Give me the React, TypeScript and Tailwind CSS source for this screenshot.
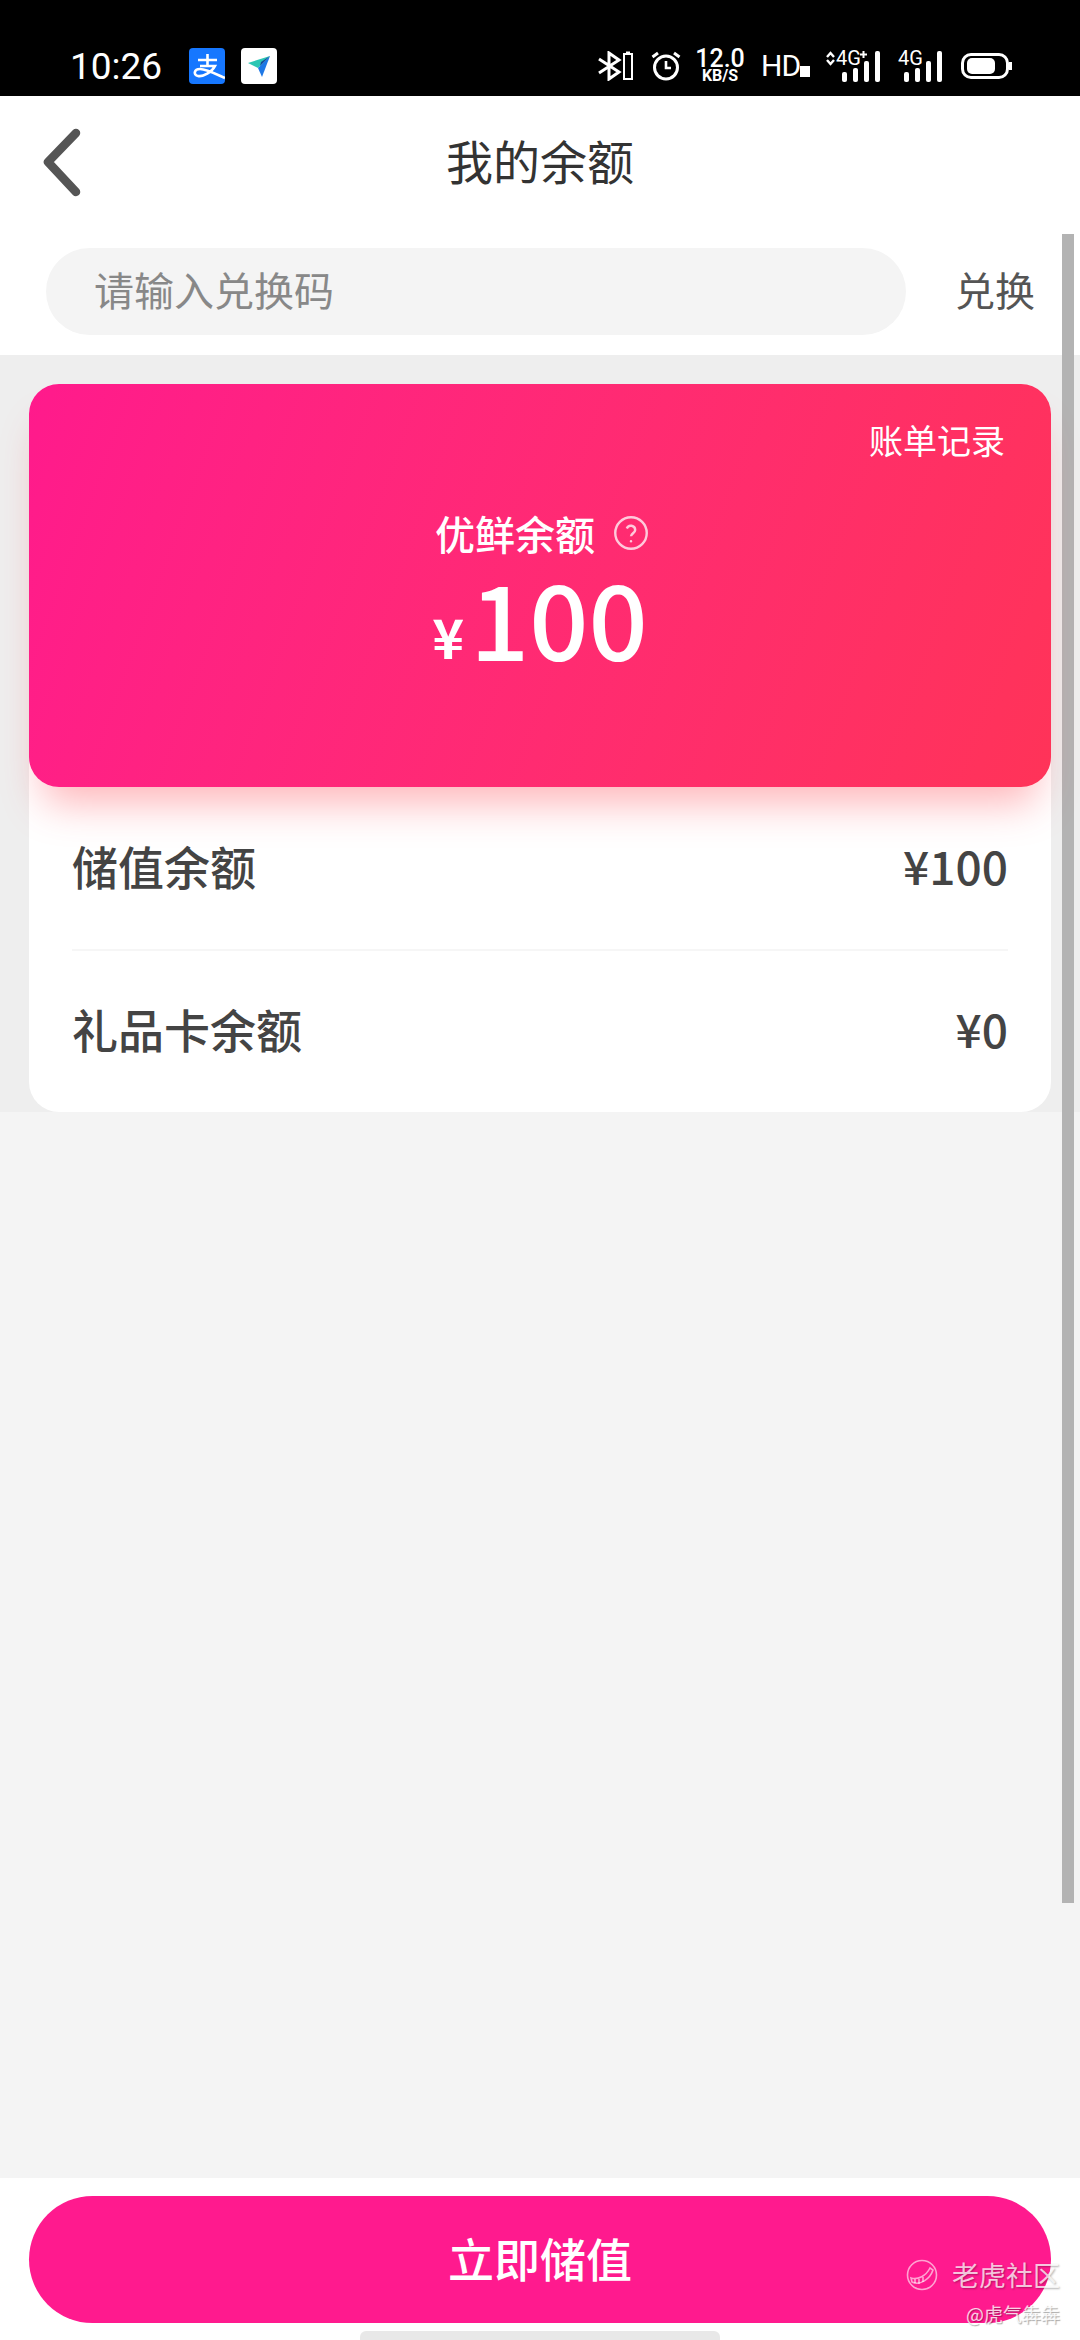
import React from 'react'

function AlipayIcon() {
  return (
    <svg width="36" height="36" viewBox="0 0 36 36" className="rounded-[4px]">
      <rect width="36" height="36" fill="#1677ff" />
      <path
        d="M9 12H28M18.5 6V18M11 18H26C23 24 14 29 9 28C4 27 5 21 11 21C17 21 27 26 36 30"
        fill="none"
        stroke="#fff"
        strokeWidth="2.6"
      />
    </svg>
  )
}

function PlaneIcon() {
  return (
    <svg width="36" height="36" viewBox="0 0 36 36" className="rounded-[4px]">
      <rect width="36" height="36" fill="#fff" />
      <path d="M7 15L29 8L17 20Z" fill="#2cc6b4" />
      <path d="M29 8L17 20L21 29Z" fill="#1e78e6" />
      <path d="M29 8L20 14L19 18Z" fill="#154a9c" />
    </svg>
  )
}

function BluetoothIcon() {
  return (
    <svg width="36" height="30" viewBox="0 0 36 30" fill="none" stroke="#fff">
      <path d="M1 8L21 21L11 28V2L21 9L1 22" strokeWidth="3" />
      <rect x="26" y="3" width="8" height="25" strokeWidth="2" />
      <path d="M28 1.5H32" strokeWidth="2" />
    </svg>
  )
}

function AlarmIcon() {
  return (
    <svg width="30" height="30" viewBox="0 0 30 30" fill="none" stroke="#fff" strokeWidth="3">
      <circle cx="15" cy="16.5" r="11.5" />
      <path d="M15 10V17H20" strokeWidth="2.6" />
      <path d="M1.5 6L7 2M23 2L28.5 6" />
    </svg>
  )
}

function SignalIcon({ plus }: { plus?: boolean }) {
  return (
    <svg width={plus ? 56 : 44} height="32" viewBox={plus ? '-17 0 56 32' : '-6 0 44 32'} fill="#fff" className="overflow-visible">
      {plus && <path d="M-15 7L-11.5 3L-8 7M-15 10L-11.5 14L-8 10" fill="none" stroke="#fff" strokeWidth="2.4" />}
      <text x="-6" y="15" fontFamily="Roboto, sans-serif" fontSize="20">
        4G
      </text>
      {plus && <path d="M21.5 1V8M18 4.5H25" stroke="#fff" strokeWidth="2" />}
      <rect x="0" y="22" width="5" height="10" rx="2" />
      <rect x="11" y="18" width="5" height="14" rx="2" />
      <rect x="22" y="11" width="5" height="21" rx="2" />
      <rect x="33" y="1" width="5" height="31" rx="2" />
    </svg>
  )
}

function BatteryIcon() {
  return (
    <svg width="52" height="26" viewBox="0 0 52 26" fill="none">
      <rect x="1.5" y="1.5" width="45" height="23" rx="8.5" stroke="#fff" strokeWidth="3" />
      <rect x="6" y="5" width="28" height="16" rx="5" fill="#fff" />
      <path d="M49.5 9V17" stroke="#fff" strokeWidth="3" />
    </svg>
  )
}

function StatusBar() {
  return (
    <div className="h-[96px] bg-black flex items-end justify-between pl-[70px] pr-[67px] pb-[12px] text-white font-['Roboto',sans-serif]">
      <div className="flex items-center h-[36px]">
        <span className="text-[37px] leading-none w-[119px]">10:26</span>
        <AlipayIcon />
        <div className="ml-[16px]">
          <PlaneIcon />
        </div>
      </div>
      <div className="flex items-center h-[36px]">
        <BluetoothIcon />
        <div className="ml-[17px]">
          <AlarmIcon />
        </div>
        <div className="ml-[16px] w-[46px] flex flex-col items-center">
          <span className="text-[25px] font-medium leading-[19px]">12.0</span>
          <span className="text-[16px] font-bold leading-[15px]">KB/S</span>
        </div>
        <div className="ml-[18px] w-[49px] flex items-end">
          <span className="text-[30px] leading-[28px] tracking-[-1px]">HD</span>
          <span className="shrink-0 ml-auto mb-[3px] w-[10px] h-[11px] bg-white" />
        </div>
        <div className="ml-[15px]">
          <SignalIcon plus />
        </div>
        <div className="ml-[17px]">
          <SignalIcon />
        </div>
        <div className="ml-[19px]">
          <BatteryIcon />
        </div>
      </div>
    </div>
  )
}

function BalanceRow({ label, value }: { label: string; value: string }) {
  return (
    <div className="flex-1 flex items-center justify-between pb-[5px] text-[#444] text-[46px] font-medium">
      <span>{label}</span>
      <span>{value}</span>
    </div>
  )
}

export default function App() {
  return (
    <div className="relative w-[1080px] h-[2340px] flex flex-col overflow-hidden bg-[#f4f4f4] font-['Noto_Sans_CJK_SC','Noto_Sans',sans-serif]">
      <StatusBar />

      <div className="h-[134px] bg-white grid grid-cols-[1fr_auto_1fr] items-center">
        <svg width="40" height="70" viewBox="0 0 40 70" fill="none" className="ml-[42px]">
          <path d="M34 5L6 34L34 64" stroke="#555" strokeWidth="8.5" strokeLinecap="round" strokeLinejoin="round" />
        </svg>
        <h1 className="pb-[7px] text-[47px] text-[#333] font-normal leading-none">我的余额</h1>
      </div>

      <div className="h-[125px] bg-white flex pl-[46px] pt-[18px]">
        <input
          placeholder="请输入兑换码"
          className="w-[860px] h-[87px] rounded-full bg-[#f4f4f4] pl-[48px] pb-[5px] text-[40px] outline-none placeholder:text-[#888]"
        />
        <span className="ml-[49px] h-[87px] pb-[5px] flex items-center text-[40px] text-[#555]">兑换</span>
      </div>

      <div className="bg-[#eeeeee] px-[29px] pt-[29px]">
        <div className="h-[728px] bg-white rounded-[30px] flex flex-col">
          <div className="relative z-10 h-[403px] rounded-[30px] bg-linear-110 from-[#ff1a8c] to-[#ff3358] shadow-[0_30px_40px_-14px_rgba(255,70,80,0.4)] flex flex-col items-center text-white">
            <div className="self-end mt-[30px] mr-[46px] text-[34px] leading-[52px]">账单记录</div>
            <div className="mt-[37px] ml-[4px] flex items-center text-[40px] font-medium leading-[60px]">
              <span>优鲜余额</span>
              <svg width="36" height="36" viewBox="0 0 24 24" fill="none" stroke="#ffffff" strokeOpacity="0.75" strokeWidth="1.6" className="ml-[18px]">
                <circle cx="12" cy="12" r="10.5" />
                <path d="M9.2 9a2.9 2.9 0 0 1 5.6 1c0 1.9-2.8 2.4-2.8 4.2" />
                <path d="M12 17.4v.1" strokeLinecap="round" />
              </svg>
            </div>
            <div className="-mt-[1px] flex items-baseline leading-[108px]">
              <span className="text-[54px] font-bold -translate-y-[2px]">¥</span>
              <span className="ml-[6px] text-[104px] font-medium">100</span>
            </div>
          </div>
          <div className="flex-1 mx-[43px] flex flex-col">
            <BalanceRow label="储值余额" value="¥100" />
            <div className="h-[2px] bg-[#f6f6f6]" />
            <BalanceRow label="礼品卡余额" value="¥0" />
          </div>
        </div>
      </div>

      <div className="flex-1" />

      <div className="h-[162px] bg-white px-[29px] pt-[18px]">
        <button className="w-full h-[127px] pb-[4px] rounded-full bg-[#ff1a8e] text-white text-[46px] font-medium">立即储值</button>
      </div>

      {/* scrollbar + home bar + watermark sit on top of the page */}
      <div className="absolute left-[1062px] top-[234px] w-[12px] h-[1669px] bg-[#b3b3b3]" />
      <div className="absolute left-[360px] top-[2331px] w-[360px] h-[9px] rounded-t-[6px] bg-[#e8e8e8]" />
      <div className="absolute left-[906px] top-[2257px] flex items-center text-white/75 text-[27px] leading-[36px] [text-shadow:1px_1px_2px_rgba(0,0,0,0.3)]">
        <svg width="32" height="32" viewBox="0 0 32 32" fill="none" stroke="#ffffff" strokeOpacity="0.6" strokeWidth="1.6">
          <circle cx="16" cy="16" r="14.5" />
          <path d="M5 19C12 21 20 17 24 9L27 11C24 20 14 27 6 23Z" />
          <path d="M9 20V24M13 20V25M17 18V23" />
        </svg>
        <span className="ml-[14px]">老虎社区</span>
      </div>
      <div className="absolute right-[20px] top-[2301px] text-white/80 text-[19px] leading-[26px] [text-shadow:1px_1px_1px_rgba(0,0,0,0.35)]">
        @虎气犇犇
      </div>
    </div>
  )
}
